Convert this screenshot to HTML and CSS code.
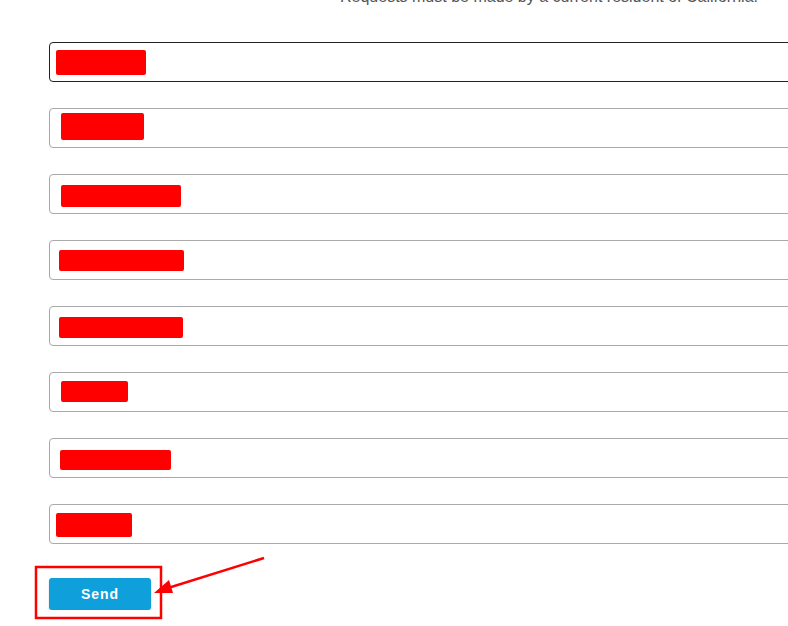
FILE: index.html
```html
<!DOCTYPE html>
<html lang="en">
<head>
    <meta charset="UTF-8">
    <meta name="viewport" content="width=device-width, initial-scale=1.0">
    <title>Request Form</title>
    <link rel="stylesheet" href="styles.css">
</head>
<body>

    <div class="page">
        <p class="notice">Requests must be made by a current resident of California.</p>

        <form class="request-form">
            <div class="field focused"><span class="redact" style="width: 90px; height: 25px; margin: 7px 0 0 6px;"></span></div>
            <div class="field"><span class="redact" style="width: 83px; height: 27px; margin: 4px 0 0 11px;"></span></div>
            <div class="field"><span class="redact" style="width: 120px; height: 22px; margin: 10px 0 0 11px;"></span></div>
            <div class="field"><span class="redact" style="width: 125px; height: 21px; margin: 9px 0 0 9px;"></span></div>
            <div class="field"><span class="redact" style="width: 124px; height: 21px; margin: 10px 0 0 9px;"></span></div>
            <div class="field"><span class="redact" style="width: 67px; height: 21px; margin: 8px 0 0 11px;"></span></div>
            <div class="field"><span class="redact" style="width: 111px; height: 20px; margin: 11px 0 0 10px;"></span></div>
            <div class="field"><span class="redact" style="width: 76px; height: 24px; margin: 8px 0 0 6px;"></span></div>

            <div class="actions">
                <button type="button" class="send-button">Send</button>
            </div>
        </form>
    </div>

    <!-- annotation drawn over the screenshot -->
    <svg class="annotation" width="788" height="626" viewBox="0 0 788 626">
        <rect x="36" y="567" width="125" height="51" fill="none" stroke="#ff0000" stroke-width="2.5"/>
        <line x1="264" y1="558" x2="168" y2="588" stroke="#ff0000" stroke-width="2.5"/>
        <polygon points="154,593 169,580 173,593" fill="#ff0000"/>
    </svg>

</body>
</html>
```

FILE: styles.css
```css
body {
    font-family: 'Liberation Sans', Arial, sans-serif;
    background-color: #fff;
    color: #555;
    margin: 0;
    padding: 0;
    overflow: hidden;
}

.page {
    position: relative;
    width: 900px;
}

.notice {
    margin: -13px 0 0 340px;
    font-size: 16px;
    line-height: 20px;
    color: #555;
    white-space: nowrap;
}

.request-form {
    padding: 35px 0 0 49px;
}

.field {
    display: flex;
    align-items: flex-start;
    box-sizing: border-box;
    width: 820px;
    height: 40px;
    margin-bottom: 26px;
    border: 1px solid #a9a9a9;
    border-radius: 4px;
    background-color: #fff;
}

.field.focused {
    border-color: #222;
}

.redact {
    display: block;
    background-color: #ff0000;
    border-radius: 2px;
}

.actions {
    padding-top: 8px;
}

.send-button {
    width: 102px;
    height: 32px;
    background-color: #0fa0dc;
    color: #fff;
    border: none;
    border-radius: 3px;
    box-shadow: 0 1px 2px rgba(0, 0, 0, 0.2);
    font-family: 'Liberation Sans', Arial, sans-serif;
    font-size: 14px;
    font-weight: 700;
    letter-spacing: 1px;
    cursor: pointer;
}

.annotation {
    position: absolute;
    top: 0;
    left: 0;
    pointer-events: none;
}
```
